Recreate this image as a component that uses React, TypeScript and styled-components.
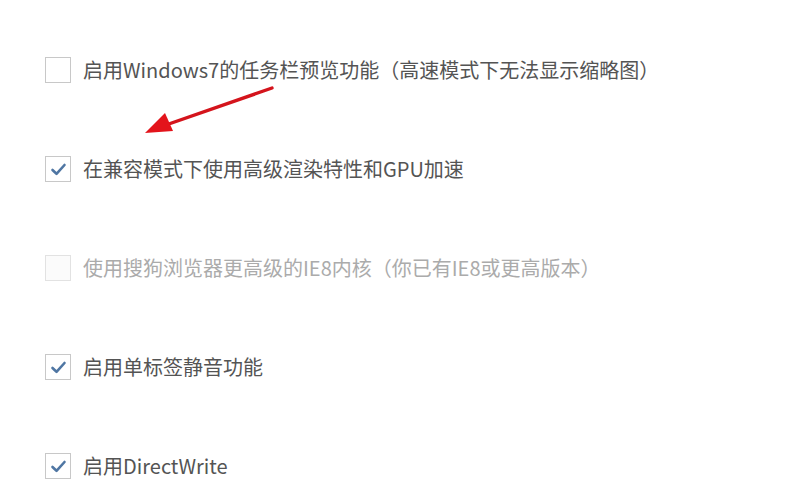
import styled, { createGlobalStyle } from 'styled-components';

const GlobalStyle = createGlobalStyle`
  html, body {
    margin: 0;
    padding: 0;
    background: #ffffff;
  }
  body {
    font-family: "Noto Sans CJK SC", "Noto Sans", sans-serif;
  }
`;

const OPTIONS = [
  { label: '启用Windows7的任务栏预览功能（高速模式下无法显示缩略图）', checked: false, disabled: false },
  { label: '在兼容模式下使用高级渲染特性和GPU加速', checked: true, disabled: false },
  { label: '使用搜狗浏览器更高级的IE8内核（你已有IE8或更高版本）', checked: false, disabled: true },
  { label: '启用单标签静音功能', checked: true, disabled: false },
  { label: '启用DirectWrite', checked: true, disabled: false },
];

const CheckMark = () => (
  <svg width="17" height="15" viewBox="0 0 17 15">
    <path
      d="M2.5 8 L6.5 11.8 L14.5 3"
      fill="none"
      stroke="#4f76a3"
      strokeWidth="2.6"
      strokeLinecap="round"
      strokeLinejoin="round"
    />
  </svg>
);

const App = () => (
  <>
    <GlobalStyle />
    <Page>
      <List>
        {OPTIONS.map(opt => (
          <Row key={opt.label} $disabled={opt.disabled}>
            <Box $disabled={opt.disabled}>{opt.checked && <CheckMark />}</Box>
            <Label $disabled={opt.disabled}>{opt.label}</Label>
          </Row>
        ))}
      </List>
      <Arrow width="140" height="56" viewBox="0 0 140 56">
        <line x1="131" y1="3" x2="22" y2="41" stroke="#d4141c" strokeWidth="3.4" strokeLinecap="round" />
        <polygon points="4,48 24,28 32,46" fill="#e3141b" />
      </Arrow>
    </Page>
  </>
);

export default App;

const Page = styled.div`
  position: relative;
  width: 800px;
  height: 500px;
  overflow: hidden;
  background: #ffffff;
`;

const List = styled.div`
  display: flex;
  flex-direction: column;
  gap: 73px;
  padding: 57px 0 0 45px;
`;

const Row = styled.label<{ $disabled: boolean }>`
  display: flex;
  align-items: center;
  height: 26px;
  cursor: ${p => (p.$disabled ? 'default' : 'pointer')};
`;

const Box = styled.span<{ $disabled: boolean }>`
  box-sizing: border-box;
  display: flex;
  align-items: center;
  justify-content: center;
  width: 26px;
  height: 26px;
  margin-right: 12px;
  border: 1.5px solid ${p => (p.$disabled ? '#e2e2e2' : '#c8c8c8')};
  background: ${p => (p.$disabled ? '#fbfbfb' : '#ffffff')};
`;

const Label = styled.span<{ $disabled: boolean }>`
  font-size: 20px;
  line-height: 26px;
  color: ${p => (p.$disabled ? '#ababab' : '#545454')};
  white-space: nowrap;
`;

const Arrow = styled.svg`
  position: absolute;
  left: 141px;
  top: 85px;
`;
